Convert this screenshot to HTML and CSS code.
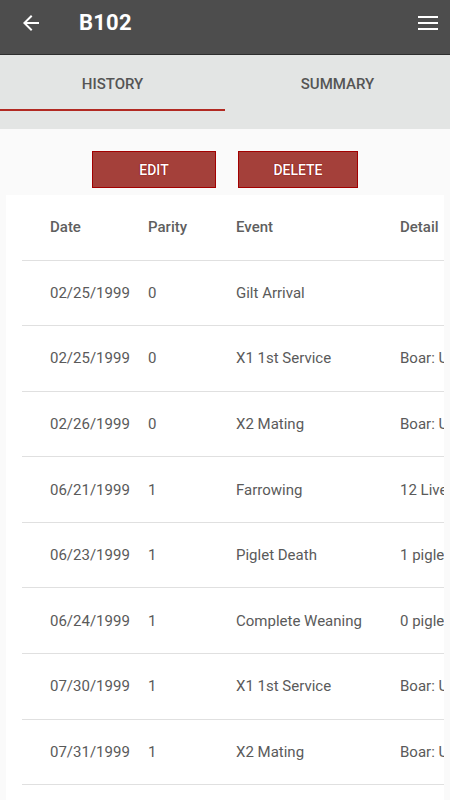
FILE: index.html
```html
<!DOCTYPE html>
<html>
<head>
    <meta charset="UTF-8">
    <meta name="viewport" content="width=device-width, initial-scale=1.0">
    <title>B102</title>
    <link rel="stylesheet" href="styles.css">
</head>
<body>
    <div class="toolbar">
        <button class="icon-btn back" aria-label="Back">
            <svg width="24" height="24" viewBox="0 0 24 24">
                <path d="M20 11H7.83l5.59-5.59L12 4l-8 8 8 8 1.41-1.41L7.83 13H20v-2z" fill="#fff"/>
            </svg>
        </button>
        <h1 class="title">B102</h1>
        <button class="icon-btn menu" aria-label="Menu">
            <svg width="24" height="24" viewBox="0 0 24 24">
                <path d="M2 5h20v2H2zM2 11h20v2H2zM2 17h20v2H2z" fill="#fff"/>
            </svg>
        </button>
    </div>

    <div class="tabs">
        <div class="tab active">HISTORY</div>
        <div class="tab">SUMMARY</div>
    </div>

    <div class="content">
        <div class="actions">
            <button class="btn btn-edit">EDIT</button>
            <button class="btn btn-delete">DELETE</button>
        </div>

        <div class="card">
            <table class="history">
                <colgroup>
                    <col class="c-date">
                    <col class="c-parity">
                    <col class="c-event">
                    <col class="c-detail">
                </colgroup>
                <thead>
                    <tr>
                        <th>Date</th>
                        <th>Parity</th>
                        <th>Event</th>
                        <th>Detail</th>
                    </tr>
                </thead>
                <tbody>
                    <tr><td>02/25/1999</td><td>0</td><td>Gilt Arrival</td><td></td></tr>
                    <tr><td>02/25/1999</td><td>0</td><td>X1 1st Service</td><td>Boar: Unknown</td></tr>
                    <tr><td>02/26/1999</td><td>0</td><td>X2 Mating</td><td>Boar: Unknown</td></tr>
                    <tr><td>06/21/1999</td><td>1</td><td>Farrowing</td><td>12 Live Born</td></tr>
                    <tr><td>06/23/1999</td><td>1</td><td>Piglet Death</td><td>1 piglet</td></tr>
                    <tr><td>06/24/1999</td><td>1</td><td>Complete Weaning</td><td>0 piglets</td></tr>
                    <tr><td>07/30/1999</td><td>1</td><td>X1 1st Service</td><td>Boar: Unknown</td></tr>
                    <tr><td>07/31/1999</td><td>1</td><td>X2 Mating</td><td>Boar: Unknown</td></tr>
                    <tr class="next"><td></td><td></td><td></td><td></td></tr>
                </tbody>
            </table>
        </div>
    </div>
</body>
</html>
```

FILE: styles.css
```css
* {
    margin: 0;
    padding: 0;
    box-sizing: border-box;
}

html,
body {
    height: 800px;
    overflow: hidden;
}

body {
    font-family: Roboto, 'Noto Sans', sans-serif;
    background: #fafafa;
}

.toolbar {
    height: 55px;
    background: #4d4d4d;
    border-bottom: 1px solid #2e2e2e;
    display: flex;
    align-items: center;
    padding: 0 10px 9px 19px;
}

.icon-btn {
    background: none;
    border: none;
    width: 24px;
    height: 24px;
    display: flex;
}

.title {
    color: #fff;
    font-size: 22px;
    font-weight: 700;
    margin-left: 36px;
    flex: 1;
    letter-spacing: 0.2px;
}

.tabs {
    display: flex;
    background: #e3e5e4;
    padding-bottom: 18px;
}

.tab {
    flex: 1;
    height: 56px;
    padding-top: 3px;
    display: flex;
    align-items: center;
    justify-content: center;
    font-size: 15px;
    font-weight: 500;
    color: #555;
    border-bottom: 2px solid transparent;
}

.tab.active {
    border-bottom-color: #b22a22;
}

.actions {
    display: flex;
    justify-content: center;
    gap: 22px;
    padding: 22px 0 7px;
}

.btn {
    height: 37px;
    background: #a4403a;
    border: 1px solid #a30000;
    color: #fff;
    font-family: inherit;
    font-size: 14px;
    font-weight: 500;
    text-shadow: 0 0 1px #8a0000, 0 0 1px #8a0000;
}

.btn-edit {
    width: 124px;
}

.btn-delete {
    width: 120px;
}

.card {
    margin: 0 6px;
    background: #fff;
    padding-left: 16px;
    overflow: hidden;
    height: 620px;
}

.history {
    border-collapse: collapse;
    table-layout: fixed;
    width: 578px;
    font-size: 15px;
}

.c-date { width: 126px; }
.c-parity { width: 88px; }
.c-event { width: 164px; }
.c-detail { width: 200px; }

.history th,
.history td {
    text-align: left;
    white-space: nowrap;
    overflow: hidden;
}

.history th:first-child,
.history td:first-child {
    padding-left: 28px;
}

.history th {
    height: 65px;
    font-weight: 500;
    color: #5f5f5f;
}

.history td {
    height: 65.6px;
    color: #5a5a5a;
    border-top: 1px solid #e0e0e0;
}
```
